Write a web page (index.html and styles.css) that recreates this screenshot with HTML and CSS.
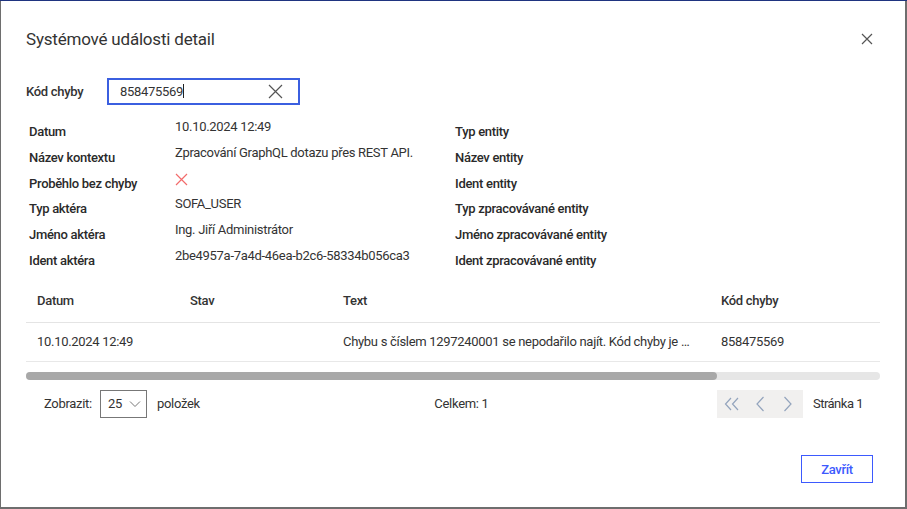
FILE: index.html
```html
<!DOCTYPE html>
<html lang="cs">
<head>
  <meta charset="UTF-8">
  <title>Systémové události detail</title>
  <link rel="stylesheet" href="styles.css">
</head>
<body>

  <!-- Modální okno -->
  <div class="modal">
    <div class="modal-header">
      <h2>Systémové události detail</h2>
      <button class="close-btn" aria-label="Zavřít">
        <svg width="12" height="12" viewBox="0 0 12 12"><path d="M1 1L11 11M11 1L1 11" stroke="#555" stroke-width="1.2"/></svg>
      </button>
    </div>

    <!-- Filtr kódu chyby -->
    <div class="filtr">
      <label>Kód chyby</label>
      <div class="input-box">
        <span class="input-text">858475569</span><span class="caret"></span>
        <svg class="clear" width="15" height="15" viewBox="0 0 15 15"><path d="M1 1L14 14M14 1L1 14" stroke="#555" stroke-width="1.2"/></svg>
      </div>
    </div>

    <!-- Detail -->
    <div class="detail">
      <div class="lbl">Datum</div><div class="val">10.10.2024 12:49</div><div class="lbl">Typ entity</div>
      <div class="lbl">Název kontextu</div><div class="val">Zpracování GraphQL dotazu přes REST API.</div><div class="lbl">Název entity</div>
      <div class="lbl">Proběhlo bez chyby</div>
      <div class="val"><svg class="chyba" width="13" height="13" viewBox="0 0 13 13"><path d="M1 1L12 12M12 1L1 12" stroke="#f26b6b" stroke-width="1.2"/></svg></div>
      <div class="lbl">Ident entity</div>
      <div class="lbl">Typ aktéra</div><div class="val">SOFA_USER</div><div class="lbl">Typ zpracovávané entity</div>
      <div class="lbl">Jméno aktéra</div><div class="val">Ing. Jiří Administrátor</div><div class="lbl">Jméno zpracovávané entity</div>
      <div class="lbl">Ident aktéra</div><div class="val">2be4957a-7a4d-46ea-b2c6-58334b056ca3</div><div class="lbl">Ident zpracovávané entity</div>
    </div>

    <!-- Tabulka -->
    <div class="tabulka">
      <table>
        <thead>
          <tr><th class="c-datum">Datum</th><th class="c-stav">Stav</th><th class="c-text">Text</th><th>Kód chyby</th></tr>
        </thead>
        <tbody>
          <tr>
            <td>10.10.2024 12:49</td>
            <td></td>
            <td class="c-text"><div class="orez">Chybu s číslem 1297240001 se nepodařilo najít. Kód chyby je 858475569</div></td>
            <td>858475569</td>
          </tr>
        </tbody>
      </table>
      <div class="scrollbar"><div class="thumb"></div></div>
    </div>

    <!-- Stránkování -->
    <div class="strankovani">
      <div class="zobrazit">
        <span>Zobrazit:</span>
        <div class="select">25
          <svg width="12" height="8" viewBox="0 0 12 8"><path d="M1 1.5L6 6.5L11 1.5" fill="none" stroke="#777" stroke-width="1"/></svg>
        </div>
        <span>položek</span>
      </div>
      <div class="celkem">Celkem: 1</div>
      <div class="stranky">
        <div class="pager">
          <span class="pbtn"><svg width="16" height="14" viewBox="0 0 16 14"><path d="M7 1L1.5 7L7 13M14 1L8.5 7L14 13" fill="none" stroke="#93a4bd" stroke-width="1.2"/></svg></span>
          <span class="pbtn"><svg width="10" height="16" viewBox="0 0 10 16"><path d="M8.5 1L2 8L8.5 15" fill="none" stroke="#93a4bd" stroke-width="1.2"/></svg></span>
          <span class="pbtn"><svg width="10" height="16" viewBox="0 0 10 16"><path d="M1.5 1L8 8L1.5 15" fill="none" stroke="#93a4bd" stroke-width="1.2"/></svg></span>
        </div>
        <span class="stranka">Stránka 1</span>
      </div>
    </div>

    <div class="modal-footer">
      <button class="btn-zavrit">Zavřít</button>
    </div>
  </div>

</body>
</html>
```

FILE: styles.css
```css
body {
  margin: 0;
  background: #6e6e6e;
  border-top: 1px solid #1f3480;
  font-family: Roboto, "Noto Sans", sans-serif;
  font-size: 13px;
  letter-spacing: -0.3px;
  color: #333;
}

/* Modální okno */
.modal {
  background: #ffffff;
  margin: 0 2px 0 1px;
  height: 506px;
  display: flex;
  flex-direction: column;
  box-sizing: border-box;
  padding: 0 25px;
}

.modal-header {
  display: flex;
  align-items: center;
  justify-content: space-between;
  height: 75px;
  padding-bottom: 1px;
}

.modal-header h2 {
  margin: 0;
  font-size: 17px;
  font-weight: 400;
  letter-spacing: -0.2px;
  color: #333;
}

.close-btn {
  border: none;
  background: none;
  padding: 0;
  margin-right: 7px;
  display: flex;
}

/* Filtr */
.filtr {
  display: flex;
  align-items: center;
  height: 28px;
}

.filtr label {
  width: 81px;
  font-weight: 500;
  color: #333;
}

.input-box {
  width: 193px;
  height: 27px;
  box-sizing: border-box;
  border: 2px solid #3b5fe0;
  display: flex;
  align-items: center;
  padding: 0 15px 0 11px;
}

.input-text {
  color: #333;
}

.caret {
  width: 1px;
  height: 14px;
  background: #222;
}

.clear {
  margin-left: auto;
}

/* Detail */
.detail {
  display: grid;
  grid-template-columns: 146px 280px 1fr;
  grid-auto-rows: 25.8px;
  padding: 14px 0 0 3px;
}

.lbl {
  padding-top: 5px;
  font-weight: 500;
  color: #2a2a2a;
}

.val {
  color: #333;
}

.chyba {
  margin-top: 2px;
}

/* Tabulka */
.tabulka {
  margin-top: 6px;
}

table {
  width: 100%;
  border-collapse: collapse;
  table-layout: fixed;
}

th {
  text-align: left;
  font-weight: 500;
  height: 42px;
  padding: 0 11px;
  border-bottom: 1px solid #e4e4e4;
  color: #333;
}

td {
  height: 38px;
  padding: 0 11px;
  border-bottom: 1px solid #e8e8e8;
  color: #333;
}

.c-datum,
.c-stav {
  width: 131px;
}

.c-text {
  width: 356px;
}

td.c-text {
  padding-right: 14px;
}

.orez {
  white-space: nowrap;
  overflow: hidden;
  text-overflow: ellipsis;
}

.scrollbar {
  margin-top: 10px;
  height: 8px;
  background: #e6e6e6;
  border-radius: 4px;
}

.thumb {
  width: 691px;
  height: 8px;
  background: #a8a8a8;
  border-radius: 4px;
}

/* Stránkování */
.strankovani {
  display: grid;
  grid-template-columns: 1fr auto 1fr;
  align-items: center;
  margin-top: 10px;
  padding: 0 17px 0 18px;
}

.zobrazit {
  display: flex;
  align-items: center;
  gap: 8px;
}

.zobrazit .select {
  margin-right: 2px;
}

.select {
  width: 47px;
  height: 28px;
  box-sizing: border-box;
  border: 1px solid #777;
  display: flex;
  align-items: center;
  gap: 7px;
  padding-left: 7px;
}

.celkem {
  margin-left: 16px;
}

.stranky {
  justify-self: end;
  display: flex;
  align-items: center;
  gap: 10px;
}

.stranka {
  letter-spacing: -0.5px;
}

.pager {
  display: flex;
  background: #f1f0ef;
  height: 28px;
  padding: 0 1px;
}

.pbtn {
  width: 28px;
  display: flex;
  align-items: center;
  justify-content: center;
}

/* Patička */
.modal-footer {
  margin-top: auto;
  display: flex;
  justify-content: flex-end;
  padding: 0 7px 24px 0;
}

.btn-zavrit {
  width: 72px;
  height: 28px;
  background: #ffffff;
  border: 1px solid #3d5afe;
  color: #3d5afe;
  font-family: Roboto, "Noto Sans", sans-serif;
  font-size: 13px;
  font-weight: 500;
  letter-spacing: -0.3px;
  cursor: pointer;
}
```
